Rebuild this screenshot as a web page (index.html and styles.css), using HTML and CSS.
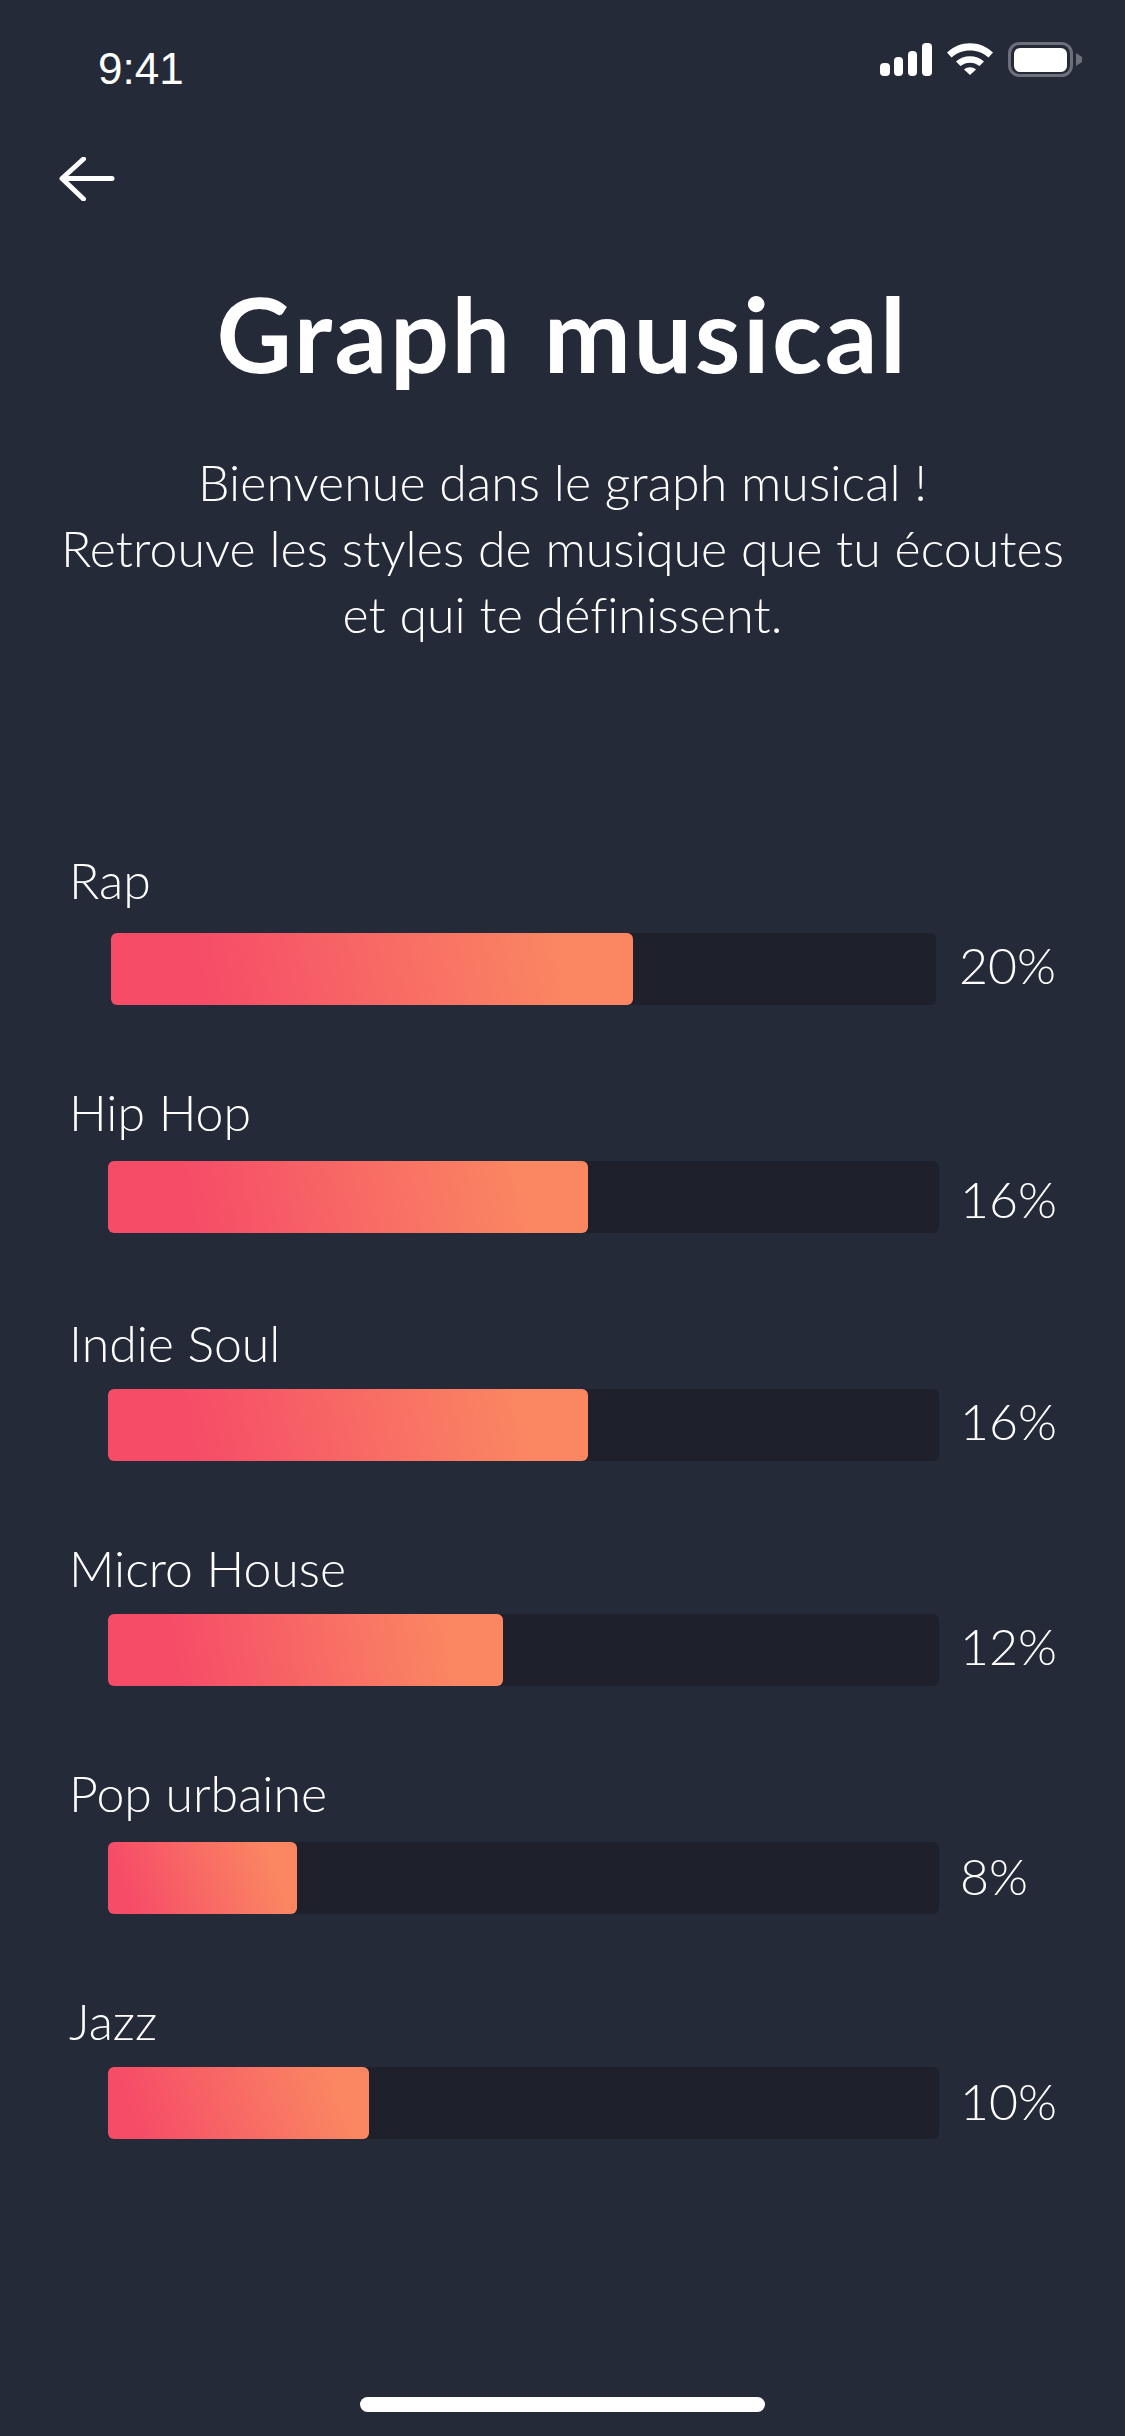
FILE: index.html
```html
<!DOCTYPE html>
<html>
	<head>
		<meta charset="UTF-8">
		<title>Graph musical</title>
		<link rel="stylesheet" href="styles.css">
	</head>
	<body>
		<div class="status">
			<span class="time">9:41</span>
			<div class="status-icons">
				<svg class="signal" width="52" height="33" viewBox="0 0 52 33">
					<rect x="0" y="20" width="10" height="13" rx="4" fill="#fff"/>
					<rect x="14" y="14" width="9" height="19" rx="4" fill="#fff"/>
					<rect x="28" y="8" width="9" height="25" rx="4" fill="#fff"/>
					<rect x="42" y="0" width="10" height="33" rx="4" fill="#fff"/>
				</svg>
				<svg class="wifi" width="46" height="32" viewBox="0 0 46 32">
					<path d="M0 9.500C12.500 -3 33.500 -3 46 9.500L41.500 14.500C31.500 5 14.500 5 4.500 14.500Z" fill="#fff"/>
					<path d="M9 18.500C16.500 11.500 29.500 11.500 37 18.500L32.500 23C27 18.500 19 18.500 13.500 23Z" fill="#fff"/>
					<path d="M17 26.500C20.500 23.500 25.500 23.500 29 26.500L23 32Z" fill="#fff"/>
				</svg>
				<svg class="battery" width="74" height="35" viewBox="0 0 74 35">
					<rect x="1.500" y="1.500" width="62" height="32" rx="10" fill="none" stroke="#6c707b" stroke-width="3"/>
					<rect x="6" y="6" width="53" height="24" rx="6" fill="#fff"/>
					<path d="M68 11L74 15V20L68 24Z" fill="#6c707b"/>
				</svg>
			</div>
		</div>
		<div class="nav">
			<svg width="56" height="44" viewBox="0 0 56 44">
				<path d="M53 21.500H4M24.500 2L3 21.500L24.500 42" fill="none" stroke="#fff" stroke-width="5" stroke-linecap="round" stroke-linejoin="round"/>
			</svg>
		</div>
		<h1 class="title">Graph musical</h1>
		<p class="intro">Bienvenue dans le graph musical !<br>Retrouve les styles de musique que tu écoutes<br>et qui te définissent.</p>
		<ul class="graph">
			<li class="item item-first">
				<div class="label">Rap</div>
				<div class="row">
					<div class="track"><div class="fill" style="width: 522px"></div></div>
					<span class="pct pct-high">20%</span>
				</div>
			</li>
			<li class="item">
				<div class="label label-mid">Hip Hop</div>
				<div class="row">
					<div class="track"><div class="fill" style="width: 480px"></div></div>
					<span class="pct pct-low">16%</span>
				</div>
			</li>
			<li class="item">
				<div class="label">Indie Soul</div>
				<div class="row">
					<div class="track"><div class="fill" style="width: 480px"></div></div>
					<span class="pct pct-high">16%</span>
				</div>
			</li>
			<li class="item item-short">
				<div class="label">Micro House</div>
				<div class="row">
					<div class="track"><div class="fill" style="width: 395px"></div></div>
					<span class="pct pct-high">12%</span>
				</div>
			</li>
			<li class="item">
				<div class="label label-far">Pop urbaine</div>
				<div class="row">
					<div class="track"><div class="fill fill-small" style="width: 189px"></div></div>
					<span class="pct pct-mid">8%</span>
				</div>
			</li>
			<li class="item item-short">
				<div class="label">Jazz</div>
				<div class="row">
					<div class="track"><div class="fill fill-small" style="width: 261px"></div></div>
					<span class="pct pct-mid">10%</span>
				</div>
			</li>
		</ul>
		<div class="home"></div>
	</body>
</html>
```
FILE: styles.css
```css
* {
	margin: 0;
	padding: 0;
	border: none;
}
ul, li {
	list-style: none;
}

html, body {
	height: 2436px;
	overflow: hidden;
}
body {
	width: 1125px;
	background: #252a38;
	color: #fff;
	font-family: "Lato", "Liberation Sans", sans-serif;
	font-weight: 300;
	display: flex;
	flex-direction: column;
}

.status {
	height: 42px;
	padding: 42px 43px 0 98px;
	display: flex;
	justify-content: space-between;
	align-items: flex-start;
}
.time {
	font-family: "Liberation Sans", sans-serif;
	font-weight: 400;
	font-size: 44px;
	line-height: 53px;
}
.status-icons {
	display: flex;
	align-items: flex-start;
	gap: 15px;
}
.signal, .wifi, .battery {
	display: block;
}
.signal, .wifi {
	margin-top: 1px;
}

.nav {
	padding: 73px 0 0 59px;
	height: 44px;
}
.nav svg {
	display: block;
}

.title {
	margin-top: 72px;
	font-size: 104px;
	line-height: 120px;
	font-weight: 700;
	text-align: center;
	letter-spacing: 2.600px;
	word-spacing: 3px;
}

.intro {
	margin-top: 56px;
	font-size: 50px;
	line-height: 66px;
	text-align: center;
	letter-spacing: 0.100px;
}

.graph {
	margin-top: 202px;
	padding-left: 69px;
}
.item {
	height: 228px;
	display: flex;
	flex-direction: column;
	justify-content: flex-end;
}
.item-first {
	height: 156px;
}
.item-short {
	height: 225px;
}
.label {
	font-size: 50px;
	line-height: 60px;
	height: 76px;
}
.item-first .label {
	height: 83px;
}
.label-mid {
	height: 79px;
}
.label-far {
	height: 79px;
}
.row {
	display: flex;
	align-items: center;
	height: 72px;
	padding-left: 39px;
	gap: 21px;
}
.track {
	width: 831px;
	height: 72px;
	background: #1e212b;
	border-radius: 6px;
}
.item-first .row {
	padding-left: 42px;
	gap: 23px;
}
.item-first .track {
	width: 825px;
}
.fill {
	height: 72px;
	border-radius: 6px;
	background: linear-gradient(80deg, #f64c68 18%, #fa8662 85%);
}
.fill-small {
	background: linear-gradient(70deg, #f64c68 12%, #fa8662 85%);
}
.pct {
	font-size: 50px;
	line-height: 72px;
}
.pct-high {
	padding-bottom: 9px;
}
.pct-mid {
	padding-bottom: 4px;
}
.pct-low {
	padding-top: 3px;
}

.home {
	width: 405px;
	height: 15px;
	margin: auto auto 24px;
	background: #fff;
	border-radius: 8px;
}
```
